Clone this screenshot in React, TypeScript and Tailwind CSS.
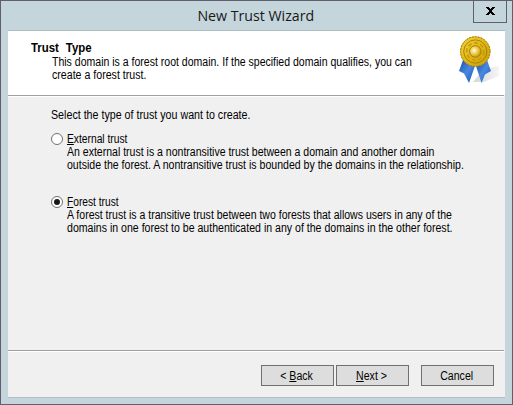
import type { ReactNode } from "react";
import clsx from "clsx";

// Dialog text is set slightly condensed
function Line({ children, className = "scale-x-[0.877]" }: { children: ReactNode; className?: string }) {
  return <p className={clsx("w-max origin-left whitespace-nowrap", className)}>{children}</p>;
}

// Mnemonic letter of a label
function Key({ children }: { children: ReactNode }) {
  return <span className="underline decoration-1 underline-offset-1">{children}</span>;
}

function Divider() {
  return <div className="h-0.5 w-[496px] shrink-0 border-t border-[#a0a0a0] bg-white" />;
}

function Radio({ checked }: { checked?: boolean }) {
  return (
    <span
      role="radio"
      aria-checked={!!checked}
      className="flex h-3 w-3 shrink-0 items-center justify-center rounded-full border border-[#707070] bg-white"
    >
      {checked && <span className="h-1.5 w-1.5 rounded-full bg-[#181818]" />}
    </span>
  );
}

function WizardButton({ children, className }: { children: ReactNode; className?: string }) {
  return (
    <button
      className={clsx(
        "flex h-[21px] w-[73px] items-center justify-center border border-[#707070] bg-[#dddddd] pt-px pr-px",
        className
      )}
    >
      <span className="scale-x-[0.88] whitespace-pre">{children}</span>
    </button>
  );
}

function Medal() {
  return (
    <svg width="44" height="50" viewBox="0 0 44 50" className="shrink-0">
      <defs>
        <linearGradient id="ribbon" x1="0" y1="0" x2="1" y2="1">
          <stop offset="0" stopColor="#174fae" />
          <stop offset="0.5" stopColor="#4a88e0" />
          <stop offset="1" stopColor="#1954b8" />
        </linearGradient>
        <linearGradient id="gold" x1="0" y1="0" x2="1" y2="1">
          <stop offset="0" stopColor="#f3d43c" />
          <stop offset="0.5" stopColor="#e0b816" />
          <stop offset="1" stopColor="#c89c04" />
        </linearGradient>
        <radialGradient id="boss" cx="0.4" cy="0.4" r="0.6">
          <stop offset="0" stopColor="#fffbd9" />
          <stop offset="0.5" stopColor="#efcf58" />
          <stop offset="1" stopColor="#c89808" />
        </radialGradient>
        <linearGradient id="shade" x1="0" y1="0" x2="1" y2="0">
          <stop offset="0" stopColor="#d6d6d6" />
          <stop offset="1" stopColor="#f5f5f5" />
        </linearGradient>
      </defs>
      <path d="M17 47 L28 34 L43 31 V41 L28 47 Z" fill="url(#shade)" />
      <path d="M7 25 L3 36 L8 38.5 L13 48 L19 31 Z" fill="url(#ribbon)" />
      <path d="M20 31 L25.5 48 L29 39.5 L35 36 L31 25 Z" fill="url(#ribbon)" />
      <circle cx="19.3" cy="16.5" r="14.8" fill="url(#gold)" stroke="#c9a21a" strokeWidth="0.8" />
      <circle cx="19.3" cy="16.5" r="14.8" fill="none" stroke="#9c7a08" strokeWidth="1" strokeDasharray="1.5 1.5" />
      <circle cx="19.3" cy="16.5" r="11.6" fill="none" stroke="#a37c06" strokeWidth="0.9" />
      <circle cx="19.3" cy="16.5" r="8.6" fill="none" stroke="#c79a08" strokeWidth="1.6" strokeDasharray="4 2.5" />
      <circle cx="19.3" cy="16.5" r="5.8" fill="url(#boss)" stroke="#a37c06" strokeWidth="0.9" />
    </svg>
  );
}

export default function App() {
  return (
    <div className="flex h-[405px] w-[513px] flex-col border border-[#5f606c] bg-[#c5d5dc] px-[7px] font-['Liberation_Sans',Arial,sans-serif] text-[12px] leading-[13px] text-black">
      <div className="relative flex h-[29px] shrink-0 justify-center">
        <h1 className="mt-[3px] scale-x-[0.945] pr-px font-['Open_Sans','Noto_Sans',sans-serif] text-[15px] leading-[22px] whitespace-nowrap text-[#181818]">
          New Trust Wizard
        </h1>
        <button
          aria-label="Close"
          className="absolute -top-px -right-[2px] flex h-[23px] w-[34px] items-center justify-center border border-[#5f606c] pb-px pl-px"
        >
          <svg width="9" height="8" viewBox="0 0 9 8" shapeRendering="crispEdges">
            <path d="M0 0H3V1H4V2H5V1H6V0H9V1H8V2H7V3H6V5H7V6H8V7H9V8H6V7H5V6H4V7H3V8H0V7H1V6H2V5H3V3H2V2H1V1H0Z" />
          </svg>
        </button>
      </div>

      <div className="flex h-[368px] w-[497px] flex-col border-y border-[#b0bec4] bg-[#f0f0f0]">
        <header className="flex h-[64px] shrink-0 justify-between bg-white">
          <div className="w-[440px] pt-[11px] pl-[22px]">
            <h2 className="ml-px w-max origin-left scale-x-[0.95] font-bold [word-spacing:4px]">Trust Type</h2>
            <div className="mt-[1px] pl-[22px]">
              <Line>This domain is a forest root domain. If the specified domain qualifies, you can</Line>
              <Line className="scale-x-[0.885]">create a forest trust.</Line>
            </div>
          </div>
          <div className="pt-[4px] pr-[5px]">
            <Medal />
          </div>
        </header>
        <Divider />

        <main className="h-[253px] shrink-0 pt-[12px] pl-[43px]">
          <Line className="scale-x-[0.89]">Select the type of trust you want to create.</Line>
          <div className="mt-[11px] flex gap-[4px]">
            <Radio />
            <div>
              <Line className="scale-x-[0.855]"><Key>E</Key>xternal trust</Line>
              <Line>An external trust is a nontransitive trust between a domain and another domain</Line>
              <Line className="scale-x-[0.88]">outside the forest. A nontransitive trust is bounded by the domains in the relationship.</Line>
            </div>
          </div>
          <div className="mt-[24px] flex gap-[4px]">
            <Radio checked />
            <div>
              <Line className="scale-x-[0.85]"><Key>F</Key>orest trust</Line>
              <Line>A forest trust is a transitive trust between two forests that allows users in any of the</Line>
              <Line className="scale-x-[0.881]">domains in one forest to be authenticated in any of the domains in the other forest.</Line>
            </div>
          </div>
        </main>
        <Divider />

        <footer className="flex justify-end pt-[13px] pr-[11px]">
          <WizardButton>{"< "}<Key>B</Key>ack</WizardButton>
          <WizardButton className="ml-[2px]"><Key>N</Key>{"ext >"}</WizardButton>
          <WizardButton className="ml-[12px]">Cancel</WizardButton>
        </footer>
      </div>
    </div>
  );
}
